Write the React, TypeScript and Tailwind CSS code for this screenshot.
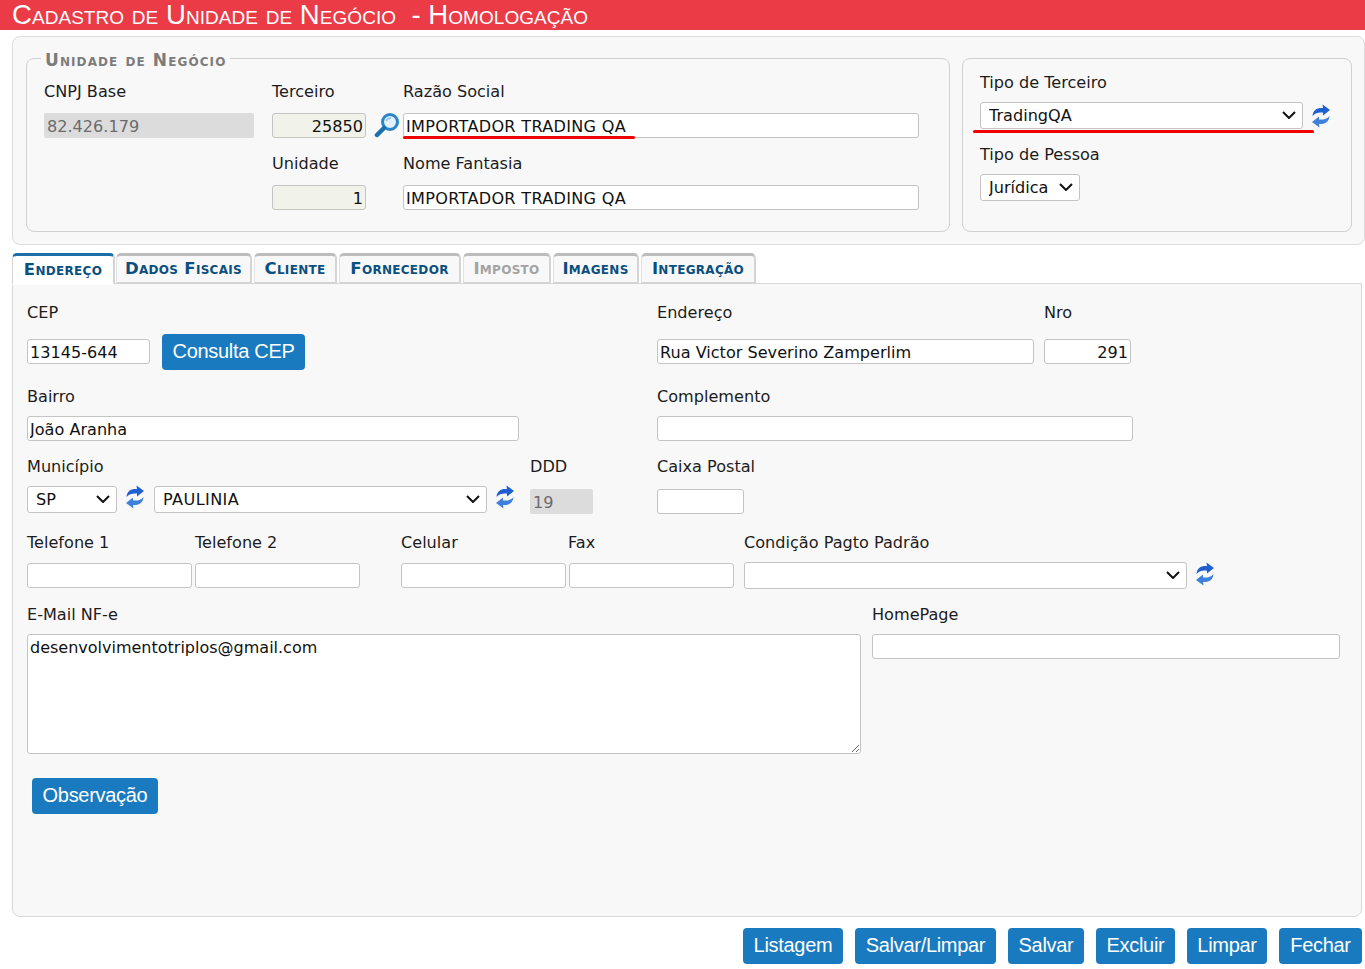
import type { ReactNode } from "react";

const inputBase =
  "h-[25px] shrink-0 rounded-[3px] border border-[#c4c4c4] px-[2px] pt-[2px] text-[16.1px] text-[#111] outline-none";
const readonlyBase =
  "h-[25px] rounded-[2px] bg-[#dcdcdc] px-[3px] pt-[2px] text-[16.1px] text-[#6b6b6b] outline-none";
const buttonBase =
  "h-[36px] shrink-0 rounded-[4px] bg-[#1a7abf] pb-[2px] text-center [font-family:Liberation_Sans,Arial,sans-serif] text-[20px] tracking-[-0.3px] text-white";

function RefreshIcon({ className = "" }: { className?: string }) {
  return (
    <svg viewBox="0 0 20 24" className={`h-[24px] w-[20px] shrink-0 ${className}`}>
      <path d="M1.5 12 C2 6 6 3.5 12 4 L11.5 0.5 L19 6 L12 11.5 L12 8.5 C7.5 8 4 9 1.5 12 Z" fill="#1f5fd0" />
      <path d="M18.5 12 C18 18 14 20.5 8 20 L8.5 23.5 L1 18 L8 12.5 L8 15.5 C12.5 16 16 15 18.5 12 Z" fill="#3f80dc" />
    </svg>
  );
}

function SearchIcon() {
  return (
    <svg viewBox="0 0 26 26" className="h-[26px] w-[26px] shrink-0">
      <circle cx="16" cy="10" r="7.5" fill="#e4f1fa" stroke="#2a86c8" strokeWidth="3" />
      <path d="M10 16 L3 23" stroke="#1a6fb0" strokeWidth="4.5" strokeLinecap="round" />
      <path d="M12 9 C13 7 15 6 17 6" stroke="#8cc3e8" strokeWidth="1.5" fill="none" />
    </svg>
  );
}

function Select({ value, className = "" }: { value: string; className?: string }) {
  return (
    <div className={`relative h-[27px] shrink-0 ${className}`}>
      <select
        defaultValue={value}
        className="h-[27px] w-full appearance-none rounded-[3px] border border-[#c4c4c4] bg-white pt-[1px] pl-[8px] text-[16.1px] text-[#111] outline-none"
      >
        <option value={value}>{value}</option>
      </select>
      <svg viewBox="0 0 14 8" className="pointer-events-none absolute top-[9px] right-[7px] h-[8px] w-[14px]">
        <path d="M1 1 L7 7 L13 1" fill="none" stroke="#111" strokeWidth="2" />
      </svg>
    </div>
  );
}

function Label({ children, className = "" }: { children?: ReactNode; className?: string }) {
  return <span className={`block h-[20px] shrink-0 leading-[22px] ${className}`}>{children}</span>;
}

function Tab({
  children,
  active,
  disabled,
  className = "",
}: {
  children: ReactNode;
  active?: boolean;
  disabled?: boolean;
  className?: string;
}) {
  const look = active
    ? "z-10 h-[32px] border-t-[3px] border-r-[#d4d4d4] border-l-[#d4d4d4] border-b-white border-t-[#1a6fa8] bg-white text-[#0b4f7f]"
    : `h-[31px] border-t-[3px] border-r-[#d4d4d4] border-l-[#e2e2e2] border-t-[#bdbdbd] border-b-[#d4d4d4] bg-[#f8f8f8] ${
        disabled ? "text-[#a3a3a3]" : "text-[#0b4f7f]"
      }`;
  return (
    <div
      className={`relative flex shrink-0 items-center justify-center rounded-t-[5px] border-r-2 border-b-2 border-l pt-[1px] text-[16.5px] font-bold tracking-[0.3px] [font-variant:small-caps] ${look} ${className}`}
    >
      {children}
    </div>
  );
}

export default function App() {
  return (
    <div className="h-[969px] w-[1365px] overflow-hidden bg-white [font-family:DejaVu_Sans,Verdana,sans-serif] text-[16.1px] text-[#1c1c1c]">
      <header className="flex h-[30px] items-center bg-[#ea3b46] pl-[12px] [font-family:Liberation_Sans,Arial,sans-serif] text-[27.5px] leading-[30px] tracking-[0.05px] whitespace-pre text-white [font-variant:small-caps]">
        Cadastro de Unidade de Negócio  - Homologação
      </header>

      <section className="mt-[6px] ml-[12px] flex h-[209px] w-[1353px] items-start rounded-[8px] border border-[#dcdcdc] bg-[#f8f8f8] pt-[21px] pl-[13px]">
        <div className="relative flex h-[174px] w-[924px] shrink-0 rounded-[8px] border border-[#d0d0d0] pt-[22px] pl-[17px]">
          <span className="absolute top-[-7px] left-[14px] bg-[#f8f8f8] px-[4px] text-[17px] leading-[16px] font-bold tracking-[1.1px] text-[#7c7c7c] [font-variant:small-caps]">
            Unidade de Negócio
          </span>
          <div className="flex w-[228px] shrink-0 flex-col">
            <Label>CNPJ Base</Label>
            <input readOnly value="82.426.179" className={`${readonlyBase} mt-[12px] w-[210px]`} />
          </div>
          <div className="flex w-[94px] shrink-0 flex-col">
            <Label>Terceiro</Label>
            <input readOnly value="25850" className={`${inputBase} mt-[12px] w-[94px] bg-[#f1f3ea] text-right`} />
            <Label className="mt-[15px]">Unidade</Label>
            <input readOnly value="1" className={`${inputBase} mt-[12px] w-[94px] bg-[#f1f3ea] text-right`} />
          </div>
          <div className="mt-[31px] ml-[8px] w-[29px] shrink-0">
            <SearchIcon />
          </div>
          <div className="flex w-[516px] shrink-0 flex-col">
            <Label>Razão Social</Label>
            <div className="relative mt-[12px] h-[25px]">
              <input readOnly value="IMPORTADOR TRADING QA" className={`${inputBase} w-[516px] bg-white tracking-[0.3px]`} />
              <div className="absolute top-[23px] left-0 h-[3px] w-[232px] rounded-full bg-[#f00000]" />
            </div>
            <Label className="mt-[15px]">Nome Fantasia</Label>
            <input readOnly value="IMPORTADOR TRADING QA" className={`${inputBase} mt-[12px] w-[516px] bg-white tracking-[0.3px]`} />
          </div>
        </div>

        <div className="ml-[12px] flex h-[174px] w-[390px] shrink-0 flex-col rounded-[8px] border border-[#d0d0d0] pt-[13px] pl-[17px]">
          <Label>Tipo de Terceiro</Label>
          <div className="relative mt-[10px] flex items-center">
            <Select value="TradingQA" className="w-[323px]" />
            <RefreshIcon className="ml-[8px]" />
            <div className="absolute top-[28px] left-[-7px] h-[3px] w-[341px] rounded-full bg-[#f00000]" />
          </div>
          <Label className="mt-[15px]">Tipo de Pessoa</Label>
          <Select value="Jurídica" className="mt-[10px] w-[100px]" />
        </div>
      </section>

      <nav className="mt-[8px] ml-[12px] flex h-[30px] items-start gap-[1px]">
        <Tab active className="w-[103px]">Endereço</Tab>
        <Tab className="w-[136px]">Dados Fiscais</Tab>
        <Tab className="ml-[1px] w-[83px]">Cliente</Tab>
        <Tab className="ml-[1px] w-[122px]">Fornecedor</Tab>
        <Tab disabled className="ml-[1px] w-[88px]">Imposto</Tab>
        <Tab className="ml-[1px] w-[86px]">Imagens</Tab>
        <Tab className="ml-[1px] w-[115px]">Integração</Tab>
      </nav>

      <main className="ml-[12px] flex h-[634px] w-[1350px] flex-col rounded-b-[8px] border border-[#d8d8d8] bg-[#f8f8f8] pt-[18px] pl-[14px]">
        <div className="flex">
          <Label className="w-[630px]">CEP</Label>
          <Label className="w-[387px]">Endereço</Label>
          <Label>Nro</Label>
        </div>
        <div className="mt-[12px] flex h-[36px] items-center">
          <input readOnly value="13145-644" className={`${inputBase} mb-[1px] w-[123px] bg-white`} />
          <button className={`${buttonBase} ml-[12px] w-[143px]`}>Consulta CEP</button>
          <input readOnly value="Rua Victor Severino Zamperlim" className={`${inputBase} mb-[1px] ml-[352px] w-[377px] bg-white`} />
          <input readOnly value="291" className={`${inputBase} mb-[1px] ml-[10px] w-[87px] bg-white text-right`} />
        </div>

        <div className="mt-[16px] flex">
          <Label className="w-[630px]">Bairro</Label>
          <Label>Complemento</Label>
        </div>
        <div className="mt-[10px] flex">
          <input readOnly value="João Aranha" className={`${inputBase} w-[492px] bg-white`} />
          <input readOnly value="" className={`${inputBase} ml-[138px] w-[476px] bg-white`} />
        </div>

        <div className="mt-[15px] flex">
          <Label className="w-[503px]">Município</Label>
          <Label className="w-[127px]">DDD</Label>
          <Label>Caixa Postal</Label>
        </div>
        <div className="mt-[10px] flex h-[28px] items-start">
          <Select value="SP" className="w-[90px]" />
          <RefreshIcon className="mt-[-1px] ml-[8px]" />
          <Select value="PAULINIA" className="ml-[9px] w-[333px] tracking-[0.4px]" />
          <RefreshIcon className="mt-[-1px] ml-[8px]" />
          <input readOnly value="19" className={`${readonlyBase} mt-[3px] ml-[15px] w-[63px] shrink-0`} />
          <input readOnly value="" className={`${inputBase} mt-[3px] ml-[64px] w-[87px] bg-white`} />
        </div>

        <div className="mt-[18px] flex">
          <Label className="w-[168px]">Telefone 1</Label>
          <Label className="w-[206px]">Telefone 2</Label>
          <Label className="w-[167px]">Celular</Label>
          <Label className="w-[176px]">Fax</Label>
          <Label>Condição Pagto Padrão</Label>
        </div>
        <div className="mt-[10px] flex h-[27px] items-center">
          <input readOnly value="" className={`${inputBase} w-[165px] bg-white`} />
          <input readOnly value="" className={`${inputBase} ml-[3px] w-[165px] bg-white`} />
          <input readOnly value="" className={`${inputBase} ml-[41px] w-[165px] bg-white`} />
          <input readOnly value="" className={`${inputBase} ml-[3px] w-[165px] bg-white`} />
          <Select value="" className="ml-[10px] w-[443px]" />
          <RefreshIcon className="mt-[-4px] ml-[8px]" />
        </div>

        <div className="mt-[15px] flex">
          <Label className="w-[845px]">E-Mail NF-e</Label>
          <Label>HomePage</Label>
        </div>
        <div className="mt-[10px] flex items-start">
          <textarea
            readOnly
            value="desenvolvimentotriplos@gmail.com"
            className="h-[120px] w-[834px] shrink-0 rounded-[3px] border border-[#c4c4c4] bg-white px-[2px] py-[3px] text-[16px] leading-[20px] text-[#111] outline-none"
          />
          <input readOnly value="" className={`${inputBase} ml-[11px] w-[468px] bg-white`} />
        </div>

        <button className={`${buttonBase} mt-[24px] ml-[5px] w-[126px]`}>Observação</button>
      </main>

      <footer className="mt-[11px] ml-[743px] flex gap-[12px]">
        <button className={`${buttonBase} w-[100px]`}>Listagem</button>
        <button className={`${buttonBase} w-[141px]`}>Salvar/Limpar</button>
        <button className={`${buttonBase} w-[76px]`}>Salvar</button>
        <button className={`${buttonBase} w-[79px]`}>Excluir</button>
        <button className={`${buttonBase} w-[80px]`}>Limpar</button>
        <button className={`${buttonBase} w-[83px]`}>Fechar</button>
      </footer>
    </div>
  );
}
